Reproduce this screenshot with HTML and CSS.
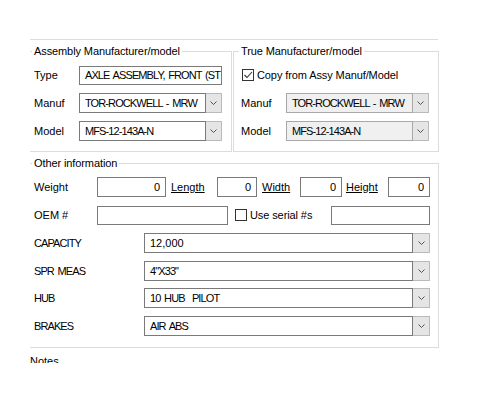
FILE: index.html
```html
<!DOCTYPE html>
<html>
<head>
<meta charset="utf-8">
<link rel="stylesheet" href="styles.css">
</head>
<body>
<div class="page">
  <div class="rule"></div>
  <div class="upper">
    <fieldset class="grp grp-asm">
      <legend>Assembly Manufacturer/model</legend>
      <div class="row">
        <span class="lbl lbl-s">Type</span>
        <div class="tb tb-s w143"><span class="caps">AXLE ASSEMBLY, FRONT (ST</span></div>
      </div>
      <div class="row">
        <span class="lbl lbl-s">Manuf</span>
        <div class="combo w143">
          <span class="cf caps">TOR-ROCKWELL - MRW</span>
          <span class="cb"><svg width="7" height="4" viewBox="0 0 7 4"><polyline points="0.5,0.5 3.5,3.5 6.5,0.5" fill="none" stroke="#555" stroke-width="1"/></svg></span>
        </div>
      </div>
      <div class="row">
        <span class="lbl lbl-s">Model</span>
        <div class="combo w143">
          <span class="cf caps">MFS-12-143A-N</span>
          <span class="cb"><svg width="7" height="4" viewBox="0 0 7 4"><polyline points="0.5,0.5 3.5,3.5 6.5,0.5" fill="none" stroke="#555" stroke-width="1"/></svg></span>
        </div>
      </div>
    </fieldset>
    <fieldset class="grp grp-true">
      <legend>True Manufacturer/model</legend>
      <div class="row">
        <span class="chk chk-copy"><svg width="10" height="10" viewBox="0 0 10 10"><polyline points="1.5,5 4,7.5 9,2" fill="none" stroke="#333" stroke-width="1.1"/></svg></span>
        <span class="chk-lbl">Copy from Assy Manuf/Model</span>
      </div>
      <div class="row">
        <span class="lbl lbl-s">Manuf</span>
        <div class="combo dis w143">
          <span class="cf caps">TOR-ROCKWELL - MRW</span>
          <span class="cb"><svg width="7" height="4" viewBox="0 0 7 4"><polyline points="0.5,0.5 3.5,3.5 6.5,0.5" fill="none" stroke="#555" stroke-width="1"/></svg></span>
        </div>
      </div>
      <div class="row">
        <span class="lbl lbl-s">Model</span>
        <div class="combo dis w143">
          <span class="cf caps">MFS-12-143A-N</span>
          <span class="cb"><svg width="7" height="4" viewBox="0 0 7 4"><polyline points="0.5,0.5 3.5,3.5 6.5,0.5" fill="none" stroke="#555" stroke-width="1"/></svg></span>
        </div>
      </div>
    </fieldset>
  </div>

  <fieldset class="grp grp-other">
    <legend>Other information</legend>
    <div class="row">
      <span class="lbl lbl-m">Weight</span>
      <div class="tb num w69">0</div>
      <span class="ul ul-len">Length</span>
      <div class="tb num w40">0</div>
      <span class="ul ul-wid">Width</span>
      <div class="tb num w42">0</div>
      <span class="ul ul-hgt">Height</span>
      <div class="tb num w42">0</div>
    </div>
    <div class="row">
      <span class="lbl lbl-m">OEM #</span>
      <div class="tb tb-s w131"></div>
      <span class="chk chk-serial"></span>
      <span class="chk-lbl">Use serial #s</span>
      <div class="tb tb-s w99 push"></div>
    </div>
    <div class="row">
      <span class="lbl lbl-l caps">CAPACITY</span>
      <div class="combo w286">
        <span class="cf">12,000</span>
        <span class="cb cb-w"><svg width="7" height="4" viewBox="0 0 7 4"><polyline points="0.5,0.5 3.5,3.5 6.5,0.5" fill="none" stroke="#555" stroke-width="1"/></svg></span>
      </div>
    </div>
    <div class="row row-c">
      <span class="lbl lbl-l caps">SPR MEAS</span>
      <div class="combo w286">
        <span class="cf caps">4"X33"</span>
        <span class="cb cb-w"><svg width="7" height="4" viewBox="0 0 7 4"><polyline points="0.5,0.5 3.5,3.5 6.5,0.5" fill="none" stroke="#555" stroke-width="1"/></svg></span>
      </div>
    </div>
    <div class="row row-c">
      <span class="lbl lbl-l caps">HUB</span>
      <div class="combo w286">
        <span class="cf caps">10 HUB  PILOT</span>
        <span class="cb cb-w"><svg width="7" height="4" viewBox="0 0 7 4"><polyline points="0.5,0.5 3.5,3.5 6.5,0.5" fill="none" stroke="#555" stroke-width="1"/></svg></span>
      </div>
    </div>
    <div class="row row-c">
      <span class="lbl lbl-l caps">BRAKES</span>
      <div class="combo w286">
        <span class="cf caps">AIR ABS</span>
        <span class="cb cb-w"><svg width="7" height="4" viewBox="0 0 7 4"><polyline points="0.5,0.5 3.5,3.5 6.5,0.5" fill="none" stroke="#555" stroke-width="1"/></svg></span>
      </div>
    </div>
  </fieldset>

  <div class="notes">Notes</div>
</div>
</body>
</html>
```

FILE: styles.css
```css
* { box-sizing: border-box; }
html, body { margin: 0; background: #fff; }
body {
  font-family: "Liberation Sans", Arial, sans-serif;
  font-size: 11px;
  color: #000;
}
.page {
  height: 363px;
  overflow: hidden;
  padding: 39px 0 0 30px;
}
.rule {
  width: 408px;
  border-top: 1px solid #dcdcdc;
}
.upper {
  display: flex;
  gap: 1px;
  margin-top: 5px;
}
.grp {
  margin: 0;
  min-width: 0;
  border: 1px solid #dcdcdc;
  border-left: none;
}
.grp legend {
  padding: 0 2px;
  margin-left: -2px;
  line-height: 12px;
  letter-spacing: -0.1px;
}
.grp-asm {
  width: 202px;
  padding: 4px 9px 6px 4px;
}
.grp-true {
  width: 206px;
  border-left: 1px solid #dcdcdc;
  padding: 4px 9px 6px 7px;
}
.grp-other {
  width: 409px;
  margin-top: 5px;
  padding: 4px 8px 7.5px 4px;
}
.row {
  display: flex;
  align-items: center;
  height: 28px;
}
.row-c { height: 27.5px; }
.lbl { flex: none; white-space: nowrap; }
.lbl-s { width: 45px; }
.lbl-m { width: 63px; }
.lbl-l { width: 110px; }
.caps { letter-spacing: -0.9px; word-spacing: 1.5px; }

.tb {
  flex: none;
  height: 20px;
  border: 1px solid #7a7a7a;
  background: #fff;
  display: flex;
  align-items: center;
  padding: 0 5px;
  overflow: hidden;
  white-space: nowrap;
}
.tb-s { height: 19px; }
.num { justify-content: flex-end; }
.push { margin-left: auto; }
.w40 { width: 40px; }
.w42 { width: 42px; }
.w69 { width: 69px; }
.w99 { width: 99px; }
.w131 { width: 131px; }
.w143 { width: 143px; }
.w286 { width: 286px; }

.ul {
  flex: none;
  text-decoration: underline;
  margin-left: 5px;
  white-space: nowrap;
}
.ul-len { width: 46px; }
.ul-wid { width: 38px; }
.ul-hgt { width: 42px; margin-left: 4px; }

.combo {
  flex: none;
  display: flex;
  height: 20px;
}
.cf {
  flex: 1;
  min-width: 0;
  border: 1px solid #7a7a7a;
  background: #fff;
  display: flex;
  align-items: center;
  padding: 0 5px;
  white-space: pre;
  overflow: hidden;
}
.cb {
  flex: none;
  width: 16px;
  background: #e5e5e5;
  border: 1px solid #bababa;
  border-left: none;
  display: flex;
  align-items: center;
  justify-content: center;
}
.cb-w { width: 17px; }
.combo.dis .cf {
  background: #f0f0f0;
  border-color: #a8a8a8;
}

.chk {
  flex: none;
  width: 12px;
  height: 12px;
  border: 1px solid #333;
  background: #fff;
  display: flex;
  align-items: center;
  justify-content: center;
}
.chk-copy { margin-left: 1px; }
.chk-serial { margin-left: 7px; }
.chk-lbl {
  margin-left: 3px;
  white-space: nowrap;
  letter-spacing: -0.1px;
}

.notes {
  margin-top: 7px;
  line-height: 13px;
}
```
